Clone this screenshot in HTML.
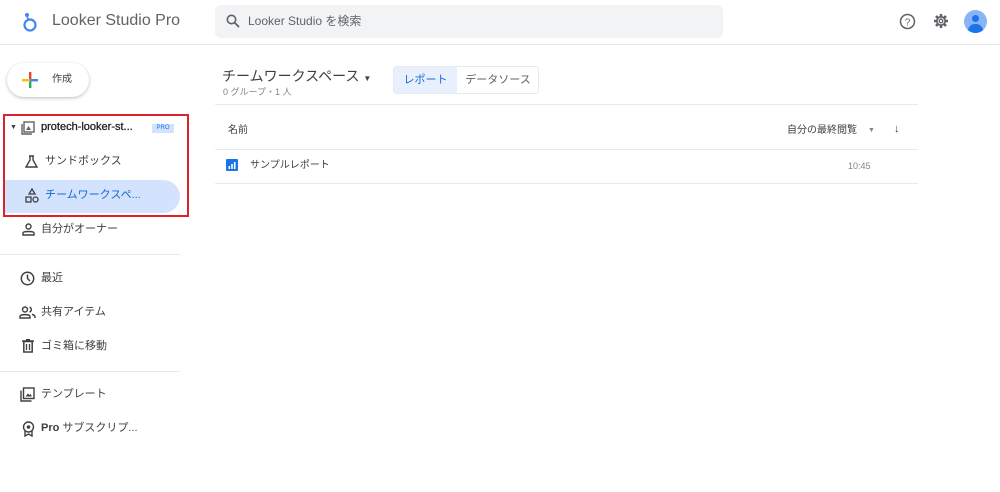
<!DOCTYPE html>
<html><head><meta charset="utf-8"><style>
*{box-sizing:border-box;margin:0;padding:0}
body{width:1000px;height:492px;background:#fff;font-family:"Liberation Sans","Noto Sans CJK JP",sans-serif;color:#3c4043;position:relative;overflow:hidden}
.a{position:absolute}
.t{font-size:11px;color:#3c4043;white-space:nowrap;line-height:13px}
.hr{position:absolute;height:1px;background:#e8eaed}
</style></head><body>
<svg class="a" style="left:22px;top:11px" width="16" height="22" viewBox="0 0 16 22"><circle cx="8" cy="14" r="5.5" fill="none" stroke="#4285f4" stroke-width="2.2"/><circle cx="5" cy="4" r="2" fill="#4285f4"/><path d="M5 6 L7 9" stroke="#4285f4" stroke-width="1.5"/></svg>
<div class="a" style="left:52px;top:12px;font-size:16px;color:#5f6368">Looker Studio Pro</div>
<div class="a" style="left:215px;top:5px;width:508px;height:33px;background:#f1f3f4;border-radius:6px"></div>
<svg class="a" style="left:226px;top:14px" width="14" height="14" viewBox="0 0 14 14"><circle cx="5.5" cy="5.5" r="4.2" fill="none" stroke="#5f6368" stroke-width="1.6"/><path d="M8.6 8.6 L13 13" stroke="#5f6368" stroke-width="1.8"/></svg>
<div class="a" style="left:248px;top:14px;font-size:12px;color:#5f6368;line-height:14px">Looker Studio を検索</div>
<svg class="a" style="left:899px;top:13px" width="17" height="17" viewBox="0 0 17 17"><circle cx="8.5" cy="8.5" r="7" fill="none" stroke="#5f6368" stroke-width="1.5"/><text x="8.5" y="12.5" font-size="10" text-anchor="middle" fill="#5f6368" font-family="Liberation Sans">?</text></svg>
<svg class="a" style="left:933px;top:13px" width="16" height="16" viewBox="0 0 16 16"><g stroke="#5f6368" stroke-width="2.6" stroke-linecap="butt"><path d="M8 1 V15 M1 8 H15 M3 3 L13 13 M13 3 L3 13"/></g><circle cx="8" cy="8" r="5" fill="#5f6368"/><circle cx="8" cy="8" r="3.3" fill="#fff"/><circle cx="8" cy="8" r="1.8" fill="none" stroke="#5f6368" stroke-width="1.3"/></svg>
<div class="a" style="left:964px;top:10px;width:23px;height:23px;border-radius:50%;background:#8ab4f8;overflow:hidden"><div class="a" style="left:8px;top:5px;width:7px;height:7px;border-radius:50%;background:#1a73e8"></div><div class="a" style="left:4px;top:14px;width:15px;height:9px;border-radius:7px 7px 0 0;background:#1a73e8"></div></div>
<div class="hr" style="left:0;top:44px;width:1000px"></div>
<div class="a" style="left:7px;top:63px;width:82px;height:34px;border-radius:17px;box-shadow:0 1px 3px rgba(60,64,67,.35);background:#fff"></div>
<svg class="a" style="left:22px;top:72px" width="16" height="16" viewBox="0 0 16 16"><rect x="7" y="0" width="2.4" height="8" fill="#ea4335"/><rect x="7" y="8" width="2.4" height="8" fill="#34a853"/><rect x="0" y="7" width="8" height="2.4" fill="#fbbc04"/><rect x="8" y="7" width="8" height="2.4" fill="#4285f4"/></svg>
<div class="a t" style="left:52px;top:73px;font-size:10px">作成</div>
<div class="a" style="left:3px;top:180px;width:177px;height:33px;border-radius:0 17px 17px 0;background:#d3e3fd"></div>
<div class="a" style="left:3px;top:114px;width:186px;height:103px;border:2px solid #e0202a"></div>
<div class="a" style="left:10px;top:124px;font-size:7px;color:#3c4043">▼</div>
<svg class="a" style="left:21px;top:121px" width="14" height="14" viewBox="0 0 14 14"><rect x="3" y="1" width="10" height="10" fill="none" stroke="#5f6368" stroke-width="1.4"/><path d="M1 3 V13 H11" fill="none" stroke="#5f6368" stroke-width="1.4"/><path d="M5 9 L7.5 5 L10 9Z" fill="#5f6368"/></svg>
<div class="a t" style="left:41px;top:121px;font-size:11px;color:#202124;-webkit-text-stroke:0.3px #202124">protech-looker-st...</div>
<div class="a" style="left:152px;top:124px;width:22px;height:9px;background:#d2e3fc;color:#1a73e8;font-size:6px;text-align:center;line-height:9px">PRO</div>
<svg class="a" style="left:25px;top:155px" width="13" height="13" viewBox="0 0 13 13"><path d="M4 1 H9 M5 1 V5 L1 12 H12 L8 5 V1" fill="none" stroke="#3c4043" stroke-width="1.4"/></svg>
<div class="a t" style="left:45px;top:155px">サンドボックス</div>
<svg class="a" style="left:25px;top:188px" width="14" height="15" viewBox="0 0 14 15"><path d="M7 1 L10 6 H4Z" fill="none" stroke="#3c4043" stroke-width="1.3"/><rect x="1" y="9" width="5" height="5" fill="none" stroke="#3c4043" stroke-width="1.3"/><circle cx="10.5" cy="11.5" r="2.5" fill="none" stroke="#3c4043" stroke-width="1.3"/></svg>
<div class="a t" style="left:45px;top:189px;color:#1967d2">チームワークスペ...</div>
<svg class="a" style="left:22px;top:223px" width="13" height="13" viewBox="0 0 13 13"><circle cx="6.5" cy="3.5" r="2.5" fill="none" stroke="#3c4043" stroke-width="1.4"/><path d="M1 12 V10 C1 8 12 8 12 10 V12Z" fill="none" stroke="#3c4043" stroke-width="1.4"/></svg>
<div class="a t" style="left:41px;top:223px">自分がオーナー</div>
<div class="hr" style="left:0;top:254px;width:180px"></div>
<svg class="a" style="left:20px;top:271px" width="15" height="15" viewBox="0 0 15 15"><circle cx="7.5" cy="7.5" r="6.2" fill="none" stroke="#3c4043" stroke-width="1.5"/><path d="M7.5 3.5 V7.5 L10 10" fill="none" stroke="#3c4043" stroke-width="1.5"/></svg>
<div class="a t" style="left:41px;top:272px">最近</div>
<svg class="a" style="left:19px;top:306px" width="17" height="13" viewBox="0 0 17 13"><circle cx="6" cy="3.5" r="2.5" fill="none" stroke="#3c4043" stroke-width="1.4"/><path d="M1 12 V10.5 C1 8 11 8 11 10.5 V12Z" fill="none" stroke="#3c4043" stroke-width="1.4"/><path d="M10.5 1.2 A2.5 2.5 0 0 1 10.5 6 M13 8.3 C15 9 16 9.5 16 11 V12" fill="none" stroke="#3c4043" stroke-width="1.4"/></svg>
<div class="a t" style="left:41px;top:306px">共有アイテム</div>
<svg class="a" style="left:22px;top:339px" width="12" height="14" viewBox="0 0 12 14"><path d="M0 2 H12 M4 0.8 H8" stroke="#3c4043" stroke-width="1.5"/><rect x="1.8" y="2.5" width="8.4" height="10.5" fill="none" stroke="#3c4043" stroke-width="1.5"/><path d="M4.5 5 V11 M7.5 5 V11" stroke="#3c4043" stroke-width="1.3"/></svg>
<div class="a t" style="left:41px;top:340px">ゴミ箱に移動</div>
<div class="hr" style="left:0;top:371px;width:180px"></div>
<svg class="a" style="left:20px;top:387px" width="15" height="15" viewBox="0 0 15 15"><rect x="3.5" y="1" width="10.5" height="10.5" fill="none" stroke="#3c4043" stroke-width="1.4"/><path d="M1 3.5 V14 H11.5" fill="none" stroke="#3c4043" stroke-width="1.4"/><path d="M5.5 9.5 L8 6.5 L9.5 8 L10.5 7 L12 9.5Z" fill="#3c4043"/></svg>
<div class="a t" style="left:41px;top:388px">テンプレート</div>
<svg class="a" style="left:22px;top:421px" width="13" height="16" viewBox="0 0 13 16"><circle cx="6.5" cy="6" r="5" fill="none" stroke="#3c4043" stroke-width="1.4"/><circle cx="6.5" cy="6" r="1.8" fill="#3c4043"/><path d="M3 10 V15 L6.5 13 L10 15 V10" fill="none" stroke="#3c4043" stroke-width="1.4"/></svg>
<div class="a t" style="left:41px;top:422px"><b>Pro</b> サブスクリプ...</div>
<div class="a" style="left:222px;top:68px;font-size:14px;color:#3c4043;line-height:17px">チームワークスペース <span style="font-size:8px">▼</span></div>
<div class="a" style="left:223px;top:87px;font-size:9px;color:#80868b;line-height:11px">0 グループ・1 人</div>
<div class="a" style="left:393px;top:66px;width:146px;height:28px;border:1px solid #e8eaed;border-radius:3px;overflow:hidden">
<div class="a" style="left:0;top:0;width:63px;height:28px;background:#e8f0fe;color:#1967d2;font-size:11px;text-align:center;line-height:26px">レポート</div>
<div class="a" style="left:63px;top:0;width:82px;height:28px;color:#5f6368;font-size:11px;text-align:center;line-height:26px">データソース</div></div>
<div class="hr" style="left:215px;top:104px;width:703px"></div>
<div class="a t" style="left:228px;top:124px;font-size:10px">名前</div>
<div class="a t" style="left:787px;top:124px;font-size:10px">自分の最終閲覧</div>
<div class="a" style="left:868px;top:127px;font-size:7px;color:#80868b">▼</div>
<div class="a" style="left:894px;top:123px;font-size:11px;color:#3c4043;font-weight:bold">↓</div>
<div class="hr" style="left:215px;top:149px;width:703px"></div>
<svg class="a" style="left:226px;top:159px" width="12" height="12" viewBox="0 0 12 12"><rect width="12" height="12" rx="1" fill="#1a73e8"/><rect x="2.5" y="7" width="1.6" height="3" fill="#fff"/><rect x="5.2" y="5" width="1.6" height="5" fill="#fff"/><rect x="7.9" y="3" width="1.6" height="7" fill="#fff"/></svg>
<div class="a t" style="left:250px;top:159px;font-size:10px">サンプルレポート</div>
<div class="a t" style="left:848px;top:160px;font-size:9px;color:#80868b">10:45</div>
<div class="hr" style="left:215px;top:183px;width:703px"></div>
</body></html>
